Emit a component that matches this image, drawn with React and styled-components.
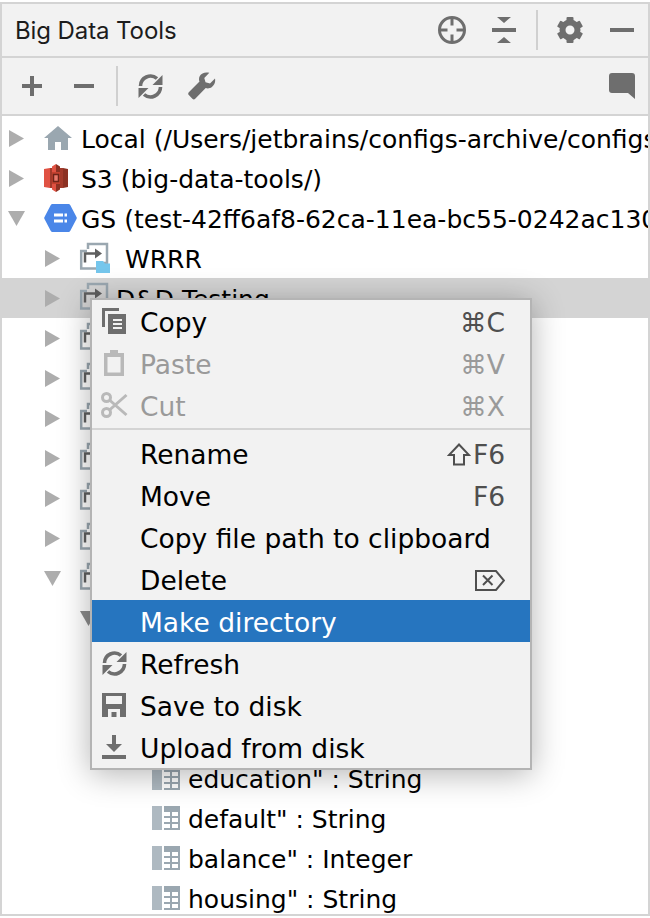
import React from "react";
import styled, { createGlobalStyle } from "styled-components";

const GlobalStyle = createGlobalStyle`
  html, body {
    margin: 0;
    padding: 0;
    background: #ffffff;
  }
`;

const Frame = styled.div`
  box-sizing: border-box;
  width: 650px;
  height: 914px;
  margin-top: 2px;
  border: 2px solid #d4d4d4;
  display: flex;
  flex-direction: column;
  overflow: hidden;
  font-family: "DejaVu Sans", sans-serif;
  background: #ffffff;
`;

const Header = styled.div`
  height: 52px;
  flex: none;
  display: flex;
  align-items: center;
  background: #f2f2f2;
  border-bottom: 2px solid #d4d4d4;
`;

const Title = styled.div`
  margin-left: 13px;
  margin-right: auto;
  font-family: "Inter", sans-serif;
  font-size: 24px;
  letter-spacing: -0.1px;
  color: #1c1c1c;
`;

const Toolbar = styled.div`
  height: 56px;
  flex: none;
  display: flex;
  align-items: center;
  padding-left: 4px;
  background: #f2f2f2;
  border-bottom: 2px solid #d4d4d4;
`;

const Slot = styled.div`
  width: 52px;
  height: 40px;
  flex: none;
  display: flex;
  align-items: center;
  justify-content: center;
  margin-left: ${(props) => (props.$end ? "auto" : "0")};
`;

const Divider = styled.div`
  width: 2px;
  height: 40px;
  margin: 0 6px;
  flex: none;
  background: #d0d0d0;
`;

const Tree = styled.div`
  position: relative;
  flex: 1;
  min-height: 0;
  padding-top: 2px;
  overflow: hidden;
`;

const Row = styled.div`
  height: 40px;
  display: flex;
  align-items: center;
  padding-left: ${(props) => 6 + props.$depth * 36}px;
  background: ${(props) => (props.$selected ? "#d4d4d4" : "transparent")};
  white-space: nowrap;
  font-size: 25px;
  color: #000000;
`;

const ArrowSlot = styled.div`
  width: 36px;
  flex: none;
  display: flex;
  align-items: center;
`;

const IconSlot = styled.div`
  width: 36px;
  flex: none;
  display: flex;
  align-items: center;
`;

const RowText = styled.span`
  padding-top: 2px;
  margin-left: ${(props) => props.$gap || 0}px;
`;

const Menu = styled.div`
  position: absolute;
  left: 88px;
  top: 182px;
  width: 442px;
  box-sizing: border-box;
  border: 2px solid #b4b4b4;
  background: #f2f2f2;
  box-shadow: 0 4px 30px rgba(0, 0, 0, 0.3);
`;

const MenuRow = styled.div`
  height: 42px;
  display: flex;
  align-items: center;
  padding-right: 25px;
  font-size: 26.5px;
  background: ${(props) => (props.$active ? "#2675bf" : "transparent")};
  color: ${(props) =>
    props.$active ? "#ffffff" : props.$disabled ? "#9a9a9a" : "#000000"};
`;

const MenuIcon = styled.div`
  width: 49px;
  height: 42px;
  flex: none;
  display: flex;
  align-items: center;
  justify-content: center;
  padding-right: 5px;
  box-sizing: border-box;
`;

const MenuLabel = styled.span`
  padding-top: 2px;
  margin-left: -1px;
`;

const Shortcut = styled.span`
  margin-left: auto;
  padding-top: 2px;
  display: flex;
  align-items: center;
  color: ${(props) => (props.$disabled ? "#9a9a9a" : "#4f4f4f")};
`;

const Separator = styled.div`
  height: 2px;
  margin: 2px 0;
  background: #d4d4d4;
`;

const GRAY = "#6e6e6e";
const LIGHT = "#b9b9b9";
const BLUEGRAY = "#9aa7b0";

const Plus = () => (
  <svg width="20" height="20" viewBox="0 0 20 20">
    <path d="M8 0h4v8h8v4h-8v8H8v-8H0V8h8z" fill={GRAY} />
  </svg>
);

const Minus = ({ width = 20 }) => (
  <svg width={width} height="4" viewBox={`0 0 ${width} 4`}>
    <rect width={width} height="4" fill={GRAY} />
  </svg>
);

const Refresh = () => (
  <svg width="25" height="25" viewBox="0 0 25 25">
    <path d="M2.500 12A10 10 0 0 1 19 4.500" fill="none" stroke={GRAY} strokeWidth="3.600" />
    <path d="M14.500 11h10V1z" fill={GRAY} />
    <path d="M22.500 13A10 10 0 0 1 6 20.500" fill="none" stroke={GRAY} strokeWidth="3.600" />
    <path d="M10.500 14H.5v10z" fill={GRAY} />
  </svg>
);

const Wrench = () => (
  <svg width="28" height="28" viewBox="0 0 28 28">
    <path
      d="M27 6.500l-5 5-4.500-1.200L16.300 6l5-5.200C17.500-.2 13.500.8 11.800 4c-1 2-1 4-.3 5.600L.8 20.300c-.8.800-.8 2 0 2.800l3.600 3.700c.8.800 2 .8 2.800 0l10.500-10.700c2 .7 4.300.4 6.200-1.100 2.600-2 3.800-5.400 3.100-8.500z"
      fill={GRAY}
    />
  </svg>
);

const Bubble = () => (
  <svg width="26" height="26" viewBox="0 0 26 26">
    <path d="M3 0h20a3 3 0 0 1 3 3v23l-7-6H3a3 3 0 0 1-3-3V3a3 3 0 0 1 3-3z" fill={GRAY} />
  </svg>
);

const Target = () => (
  <svg width="28" height="28" viewBox="0 0 28 28">
    <circle cx="14" cy="14" r="12.500" fill="none" stroke={GRAY} strokeWidth="3" />
    <path d="M12.500 1h3v8.500h-3zM12.500 18.500h3V27h-3zM1 12.500h8.500v3H1zM18.500 12.500H27v3h-8.500z" fill={GRAY} />
  </svg>
);

const CollapseAll = () => (
  <svg width="24" height="26" viewBox="0 0 24 26">
    <path d="M5 0h14l-7 6zM0 11h24v4H0zM12 20l7 6H5z" fill={GRAY} />
  </svg>
);

const Gear = () => (
  <svg width="26" height="26" viewBox="0 0 26 26">
    <circle cx="13" cy="13" r="7.500" fill="none" stroke={GRAY} strokeWidth="6" />
    <g fill={GRAY}>
      {[0, 60, 120, 180, 240, 300].map((angle) => (
        <rect key={angle} x="9.500" y="0" width="7" height="6" rx="1" transform={`rotate(${angle} 13 13)`} />
      ))}
    </g>
  </svg>
);

const TreeArrow = ({ down, dark }) => (
  <svg width="17" height="17" viewBox="0 0 17 17">
    <path d={down ? "M0 1h17L8.500 16z" : "M1 0l15 8.500L1 17z"} fill={dark ? "#8c8c8c" : "#adadad"} />
  </svg>
);

const House = () => (
  <svg width="28" height="24" viewBox="0 0 28 24">
    <path d="M14 0l14 12h-4v12h-7v-8h-6v8H4V12H0z" fill={BLUEGRAY} />
  </svg>
);

const S3Bucket = () => (
  <svg width="24" height="28" viewBox="0 0 24 28">
    <path d="M0 5l6-1v20l-6-1z" fill="#e05243" />
    <path d="M24 5l-5-1v20l5-1z" fill="#8c3123" />
    <path d="M6 4h2v20H6zM16 4h3v20h-3z" fill="#a33a2b" />
    <path d="M12 0l-4 2.500V8h4zM12 20H8v5.500l4 2.500z" fill="#e05243" />
    <path d="M12 0l4 2.500V8h-4zM12 20h4v5.500L12 28z" fill="#8c3123" />
    <path d="M8 8h8v12H8z" fill="#c4412f" />
    <path d="M9.500 10.500h5v7h-5z" fill="#e9786b" stroke="#6e2419" strokeWidth="1.500" />
  </svg>
);

const GcsHexagon = () => (
  <svg width="33" height="28" viewBox="0 0 33 28">
    <path d="M8.500 0h16a2 2 0 0 1 1.700 1l6.300 12a2 2 0 0 1 0 2l-6.300 12a2 2 0 0 1-1.700 1h-16a2 2 0 0 1-1.700-1L.5 15a2 2 0 0 1 0-2L6.800 1a2 2 0 0 1 1.700-1z" fill="#4a86e8" />
    <path d="M10 9.500h9v3h-9zM10 15.500h9v3h-9zM20.500 9.500h2.500v3h-2.500zM20.500 15.500h2.500v3h-2.500z" fill="#ffffff" />
  </svg>
);

const Bucket = ({ folder }) => (
  <svg width="30" height="30" viewBox="0 0 30 30" style={{ overflow: "visible" }}>
    <path d="M8 6V1h19v19h-5" fill="none" stroke={BLUEGRAY} strokeWidth="2.500" />
    <path d="M7 8H1.200v17.500H20V22" fill="none" stroke={BLUEGRAY} strokeWidth="2.500" />
    <path d="M5 19.500V10.500h11" fill="none" stroke="#5f5f5f" strokeWidth="2.500" />
    <path d="M15 5.500l7 5-7 5z" fill="#5f5f5f" />
    {folder && <path d="M16 18h7l2 2.500h5V30H16z" fill="#75c6ec" />}
  </svg>
);

const TableIcon = () => (
  <svg width="28" height="24" viewBox="0 0 28 24">
    <rect x="0" y="0" width="10" height="24" fill="#aeb9c1" />
    <rect x="12" y="0" width="16" height="24" fill={BLUEGRAY} />
    <path d="M12 6h6v4h-6zM20 6h6v4h-6zM12 12h6v4h-6zM20 12h6v4h-6zM12 18h6v4h-6zM20 18h6v4h-6z" fill="#ffffff" />
  </svg>
);

const CopyIcon = () => (
  <svg width="24" height="26" viewBox="0 0 24 26">
    <path d="M0 0h17v3H3v16H0z" fill={GRAY} />
    <path d="M6 6h18v20H6z" fill={GRAY} />
    <path d="M11 11h9v2h-9zM11 15h9v2h-9zM11 19h9v2h-9z" fill="#f2f2f2" />
  </svg>
);

const PasteIcon = () => (
  <svg width="20" height="26" viewBox="0 0 20 26">
    <path d="M0 3h6V0h8v3h6v23H0zM3.500 7v15.500h13V7z" fill={LIGHT} fillRule="evenodd" />
  </svg>
);

const CutIcon = () => (
  <svg width="27" height="26" viewBox="0 0 27 26">
    <g fill="none" stroke={LIGHT} strokeWidth="3">
      <circle cx="5.500" cy="5.500" r="4" />
      <circle cx="5.500" cy="20.500" r="4" />
      <path d="M8.500 8l17 15M8.500 18L25.500 3" />
    </g>
  </svg>
);

const ShiftIcon = () => (
  <svg width="24" height="23" viewBox="0 0 24 23" style={{ marginRight: 2 }}>
    <path d="M12 1.500L22 12h-5v9.500H7V12H2z" fill="none" stroke="#4f4f4f" strokeWidth="2" />
  </svg>
);

const DeleteIcon = () => (
  <svg width="30" height="21" viewBox="0 0 30 21">
    <path d="M1 1h20l8 9.500-8 9.500H1z" fill="none" stroke="#4f4f4f" strokeWidth="2" />
    <path d="M8 5.500l9.500 9.500M17.500 5.500L8 15" fill="none" stroke="#4f4f4f" strokeWidth="2" />
  </svg>
);

const SaveIcon = () => (
  <svg width="24" height="24" viewBox="0 0 24 24">
    <path d="M0 0h24v24H0zM4 3v8h16V3zM6 16v8h12v-8zM9.500 19h5v5h-5z" fill={GRAY} fillRule="evenodd" />
  </svg>
);

const UploadIcon = () => (
  <svg width="24" height="24" viewBox="0 0 24 24">
    <path d="M10 0h4v9h6l-8 8-8-8h6zM0 20h24v4H0z" fill={GRAY} />
  </svg>
);

const bucketRows = [
  { name: "WRRR", folder: true, gap: 9 },
  { name: "D&D Testing", selected: true },
  { name: "" },
  { name: "" },
  { name: "" },
  { name: "" },
  { name: "" },
  { name: "" },
  { name: "", open: true },
];

const fieldRows = ['education" : String', 'default" : String', 'balance" : Integer', 'housing" : String'];

const App = () => {
  return (
    <>
      <GlobalStyle />
      <Frame>
        <Header>
          <Title>Big Data Tools</Title>
          <Slot><Target /></Slot>
          <Slot><CollapseAll /></Slot>
          <Divider />
          <Slot><Gear /></Slot>
          <Slot><Minus width={24} /></Slot>
        </Header>
        <Toolbar>
          <Slot><Plus /></Slot>
          <Slot><Minus /></Slot>
          <Divider />
          <Slot><Refresh /></Slot>
          <Slot><Wrench /></Slot>
          <Slot $end><Bubble /></Slot>
        </Toolbar>
        <Tree>
          <Row $depth={0}>
            <ArrowSlot><TreeArrow /></ArrowSlot>
            <IconSlot><House /></IconSlot>
            <RowText $gap={1}>Local (/Users/jetbrains/configs-archive/configs-master)</RowText>
          </Row>
          <Row $depth={0}>
            <ArrowSlot><TreeArrow /></ArrowSlot>
            <IconSlot><S3Bucket /></IconSlot>
            <RowText $gap={1}>S3 (big-data-tools/)</RowText>
          </Row>
          <Row $depth={0}>
            <ArrowSlot><TreeArrow down /></ArrowSlot>
            <IconSlot><GcsHexagon /></IconSlot>
            <RowText $gap={1}>GS (test-42ff6af8-62ca-11ea-bc55-0242ac130003)</RowText>
          </Row>
          {bucketRows.map((row, index) => (
            <Row key={index} $depth={1} $selected={row.selected}>
              <ArrowSlot><TreeArrow down={row.open} /></ArrowSlot>
              <IconSlot><Bucket folder={row.folder} /></IconSlot>
              <RowText $gap={row.gap}>{row.name}</RowText>
            </Row>
          ))}
          <Row $depth={2}>
            <ArrowSlot><TreeArrow down dark /></ArrowSlot>
          </Row>
          <Row $depth={3} />
          <Row $depth={3} />
          <Row $depth={3} />
          {fieldRows.map((field) => (
            <Row key={field} $depth={3}>
              <ArrowSlot />
              <IconSlot><TableIcon /></IconSlot>
              <RowText>{field}</RowText>
            </Row>
          ))}
          <Menu>
            <MenuRow>
              <MenuIcon><CopyIcon /></MenuIcon>
              <MenuLabel>Copy</MenuLabel>
              <Shortcut>⌘C</Shortcut>
            </MenuRow>
            <MenuRow $disabled>
              <MenuIcon><PasteIcon /></MenuIcon>
              <MenuLabel>Paste</MenuLabel>
              <Shortcut $disabled>⌘V</Shortcut>
            </MenuRow>
            <MenuRow $disabled>
              <MenuIcon><CutIcon /></MenuIcon>
              <MenuLabel>Cut</MenuLabel>
              <Shortcut $disabled>⌘X</Shortcut>
            </MenuRow>
            <Separator />
            <MenuRow>
              <MenuIcon />
              <MenuLabel>Rename</MenuLabel>
              <Shortcut><ShiftIcon />F6</Shortcut>
            </MenuRow>
            <MenuRow>
              <MenuIcon />
              <MenuLabel>Move</MenuLabel>
              <Shortcut>F6</Shortcut>
            </MenuRow>
            <MenuRow>
              <MenuIcon />
              <MenuLabel>Copy file path to clipboard</MenuLabel>
            </MenuRow>
            <MenuRow>
              <MenuIcon />
              <MenuLabel>Delete</MenuLabel>
              <Shortcut><DeleteIcon /></Shortcut>
            </MenuRow>
            <MenuRow $active>
              <MenuIcon />
              <MenuLabel>Make directory</MenuLabel>
            </MenuRow>
            <MenuRow>
              <MenuIcon><Refresh /></MenuIcon>
              <MenuLabel>Refresh</MenuLabel>
            </MenuRow>
            <MenuRow>
              <MenuIcon><SaveIcon /></MenuIcon>
              <MenuLabel>Save to disk</MenuLabel>
            </MenuRow>
            <MenuRow>
              <MenuIcon><UploadIcon /></MenuIcon>
              <MenuLabel>Upload from disk</MenuLabel>
            </MenuRow>
          </Menu>
        </Tree>
      </Frame>
    </>
  );
};

export default App;
